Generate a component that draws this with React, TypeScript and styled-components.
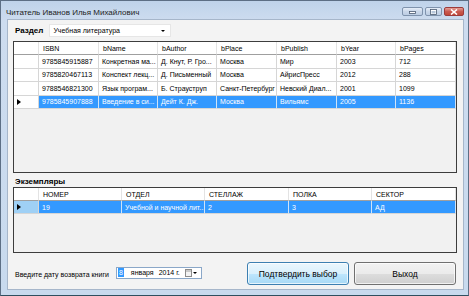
import React from "react";
import styled, { createGlobalStyle } from "styled-components";

const Global = createGlobalStyle`
  html, body { margin: 0; padding: 0; overflow: hidden; background: #fff; }
  * { box-sizing: border-box; }
  body { font-family: "Liberation Sans", Arial, sans-serif; }
`;

const Window = styled.div`
  width: 469px;
  height: 296px;
  display: flex;
  flex-direction: column;
  background: linear-gradient(180deg, #bfd3ea 0px, #cddcef 20px, #c8daee 100%);
  border: 1px solid #5d6f85;
  border-bottom-color: #2f4f5f;
`;

const TitleBar = styled.div`
  height: 18px;
  display: flex;
  align-items: center;
  padding: 0 4px 0 5px;
  flex-shrink: 0;
`;

const Title = styled.div`
  flex: 1;
  font-size: 8px;
  color: #1e1e1e;
  padding-top: 4px;
  white-space: nowrap;
`;

const Controls = styled.div`
  display: flex;
  gap: 2px;
  align-self: flex-start;
  margin-top: 6px;
`;

const CtrlBtn = styled.div<{ $w: number; $close?: boolean }>`
  width: ${(p) => p.$w}px;
  height: 9px;
  border: 1px solid ${(p) => (p.$close ? "#9c3b3b" : "#7f93ad")};
  border-radius: 2px;
  background: ${(p) =>
    p.$close
      ? "linear-gradient(180deg, #e5a097 0%, #c95a50 50%, #c04838 100%)"
      : "linear-gradient(180deg, #e6eef8 0%, #c9d7e9 50%, #bccde3 100%)"};
  display: flex;
  align-items: center;
  justify-content: center;
`;

const Client = styled.div`
  flex: 1;
  margin: 0 4px 5px 6px;
  background: #f3f3f3;
  border: 1px solid #a6b6ca;
  display: flex;
  flex-direction: column;
  padding: 0 6px 0 5px;
`;

const TopRow = styled.div`
  display: flex;
  align-items: center;
  height: 13px;
  margin-top: 4px;
  gap: 6px;
`;

const BoldLabel = styled.div`
  font-size: 8px;
  font-weight: bold;
  color: #000;
  margin-left: 2px;
  white-space: nowrap;
`;

const Combo = styled.div`
  width: 122px;
  height: 13px;
  background: #fff;
  border: 1px solid #e6e6e6;
  display: flex;
  align-items: center;
  padding: 0 5px 0 3px;
  font-size: 7px;
  color: #000;
`;

const ComboText = styled.div`
  flex: 1;
`;

const DownArrow = styled.div<{ $size?: number }>`
  width: 0;
  height: 0;
  border-left: ${(p) => p.$size ?? 3}px solid transparent;
  border-right: ${(p) => p.$size ?? 3}px solid transparent;
  border-top: ${(p) => p.$size ?? 3}px solid #000;
`;

const Grid = styled.div<{ $h: number; $mt: number }>`
  height: ${(p) => p.$h}px;
  margin-top: ${(p) => p.$mt}px;
  border: 1px solid #3d3d3d;
  background: #f1f1f1;
  overflow: hidden;
  flex-shrink: 0;
`;

const Row = styled.div<{ $cols: string; $h: number }>`
  display: grid;
  grid-template-columns: ${(p) => p.$cols};
  height: ${(p) => p.$h}px;
`;

const HeaderCell = styled.div`
  background: #fff;
  border-right: 1px solid #e3e3e3;
  border-bottom: 1px solid #9f9f9f;
  padding-left: 4px;
  font-size: 7px;
  color: #000;
  display: flex;
  align-items: center;
  white-space: nowrap;
  overflow: hidden;
`;

const Cell = styled.div<{ $sel?: boolean }>`
  background: ${(p) => (p.$sel ? "#3399ff" : "#fff")};
  color: ${(p) => (p.$sel ? "#fff" : "#000")};
  border-right: 1px solid ${(p) => (p.$sel ? "#cfe3f8" : "#d6d6d6")};
  border-bottom: 1px solid #d6d6d6;
  padding-left: 3px;
  font-size: 7px;
  display: flex;
  align-items: center;
  white-space: nowrap;
  overflow: hidden;
`;

const RowHead = styled.div<{ $tone: "plain" | "blue" }>`
  background: ${(p) => (p.$tone === "blue" ? "#9fd0f5" : "#fff")};
  border-right: 1px solid #d6d6d6;
  border-bottom: 1px solid #d6d6d6;
  display: flex;
  align-items: center;
  padding-left: 3px;
`;

const Pointer = styled.div`
  width: 0;
  height: 0;
  border-top: 3.5px solid transparent;
  border-bottom: 3.5px solid transparent;
  border-left: 4px solid #000;
`;

const SectionLabel = styled.div`
  height: 14px;
  display: flex;
  align-items: center;
  padding-top: 2px;
`;

const BottomRow = styled.div`
  display: flex;
  align-items: center;
  height: 23px;
  margin-top: 9px;
  padding-right: 1px;
`;

const SmallLabel = styled.div`
  font-size: 7px;
  color: #000;
  margin-left: 2px;
  margin-top: 1px;
  white-space: nowrap;
`;

const DatePicker = styled.div`
  margin-left: 7px;
  width: 86px;
  height: 12px;
  margin-top: -2px;
  background: #fff;
  border: 1px solid #8aa7c8;
  display: flex;
  align-items: center;
  padding-left: 1px;
  font-size: 7px;
  color: #000;
`;

const DayPart = styled.div`
  background: #3399ff;
  color: #fff;
  height: 9px;
  width: 6px;
  display: flex;
  align-items: center;
  justify-content: center;
  margin-right: 7px;
`;

const DatePart = styled.div<{ $ml?: number }>`
  margin-left: ${(p) => p.$ml ?? 0}px;
  white-space: nowrap;
`;

const CalIcon = styled.div`
  margin-left: 5px;
  width: 7px;
  height: 8px;
  border: 1px solid #8c8c8c;
  background: linear-gradient(180deg, #c9c9c9 0 2px, #f3f3f3 2px);
  margin-right: 1px;
`;

const Spacer = styled.div`
  flex: 1;
`;

const Button = styled.div<{ $focus?: boolean }>`
  width: 102px;
  height: 23px;
  border-radius: 3px;
  border: 1px solid ${(p) => (p.$focus ? "#3c7fb1" : "#707070")};
  background: ${(p) =>
    p.$focus
      ? "linear-gradient(180deg, #eaf6fd 0%, #d9f0fc 50%, #bee6fd 51%, #a7d9f5 100%)"
      : "linear-gradient(180deg, #f2f2f2 0%, #ebebeb 50%, #dddddd 51%, #cfcfcf 100%)"};
  box-shadow: inset 0 0 0 1px rgba(255, 255, 255, 0.7);
  display: flex;
  align-items: center;
  justify-content: center;
  font-size: 8.5px;
  color: #000;
  margin-left: 5px;
`;

const cols1 = "25px 60px 59px 59px 60px 60px 59px 1fr";
const cols2 = "25px 83px 83px 84px 83px 1fr";

const head1 = ["ISBN", "bName", "bAuthor", "bPlace", "bPublish", "bYear", "bPages"];
const rows1 = [
  ["9785845915887", "Конкретная ма...", "Д. Кнут, Р. Гро...", "Москва", "Мир", "2003", "712"],
  ["9785820467113", "Конспект лекц...", "Д. Письменный", "Москва", "АйрисПресс", "2012", "288"],
  ["9788546821300", "Язык програм...", "Б. Страуструп", "Санкт-Петербург", "Невский Диал...", "2001", "1099"],
  ["9785845907888", "Введение в си...", "Дейт К. Дж.", "Москва", "Вильямс", "2005", "1136"],
];
const head2 = ["НОМЕР", "ОТДЕЛ", "СТЕЛЛАЖ", "ПОЛКА", "СЕКТОР"];
const rows2 = [["19", "Учебной и научной лит...", "2", "3", "АД"]];

export default function App() {
  return (
    <>
      <Global />
      <Window>
        <TitleBar>
          <Title>Читатель Иванов Илья Михайлович</Title>
          <Controls>
            <CtrlBtn $w={21}>
              <svg width="7" height="4" viewBox="0 0 7 4">
                <rect x="0.5" y="1.5" width="6" height="2" fill="#fff" stroke="#4a5a70" strokeWidth="0.8" />
              </svg>
            </CtrlBtn>
            <CtrlBtn $w={17}>
              <svg width="7" height="6" viewBox="0 0 7 6">
                <rect x="0.5" y="0.5" width="6" height="5" fill="#fff" stroke="#4a5a70" strokeWidth="0.8" />
                <rect x="1.5" y="2" width="4" height="2.5" fill="#b8c8dc" />
              </svg>
            </CtrlBtn>
            <CtrlBtn $w={20} $close>
              <svg width="8" height="6" viewBox="0 0 8 6">
                <path d="M1 0.5 L7 5.5 M7 0.5 L1 5.5" stroke="#fff" strokeWidth="1.6" />
              </svg>
            </CtrlBtn>
          </Controls>
        </TitleBar>
        <Client>
          <TopRow>
            <BoldLabel>Раздел</BoldLabel>
            <Combo>
              <ComboText>Учебная литература</ComboText>
              <DownArrow $size={2.5} />
            </Combo>
          </TopRow>
          <Grid $h={132} $mt={4}>
            <Row $cols={cols1} $h={13}>
              <HeaderCell />
              {head1.map((h) => (
                <HeaderCell key={h}>{h}</HeaderCell>
              ))}
            </Row>
            {rows1.map((r, i) => {
              const sel = i === rows1.length - 1;
              return (
                <Row key={i} $cols={cols1} $h={13.5}>
                  <RowHead $tone="plain">{sel && <Pointer />}</RowHead>
                  {r.map((c, j) => (
                    <Cell key={j} $sel={sel}>
                      {c}
                    </Cell>
                  ))}
                </Row>
              );
            })}
          </Grid>
          <SectionLabel>
            <BoldLabel>Экземпляры</BoldLabel>
          </SectionLabel>
          <Grid $h={66} $mt={0}>
            <Row $cols={cols2} $h={13}>
              <HeaderCell />
              {head2.map((h) => (
                <HeaderCell key={h}>{h}</HeaderCell>
              ))}
            </Row>
            {rows2.map((r, i) => (
              <Row key={i} $cols={cols2} $h={13}>
                <RowHead $tone="blue">
                  <Pointer />
                </RowHead>
                {r.map((c, j) => (
                  <Cell key={j} $sel>
                    {c}
                  </Cell>
                ))}
              </Row>
            ))}
          </Grid>
          <BottomRow>
            <SmallLabel>Введите дату возврата книги</SmallLabel>
            <DatePicker>
              <DayPart>8</DayPart>
              <DatePart>января</DatePart>
              <DatePart $ml={5}>2014 г.</DatePart>
              <CalIcon />
              <DownArrow $size={2.5} />
            </DatePicker>
            <Spacer />
            <Button $focus>Подтвердить выбор</Button>
            <Button>Выход</Button>
          </BottomRow>
        </Client>
      </Window>
    </>
  );
}
